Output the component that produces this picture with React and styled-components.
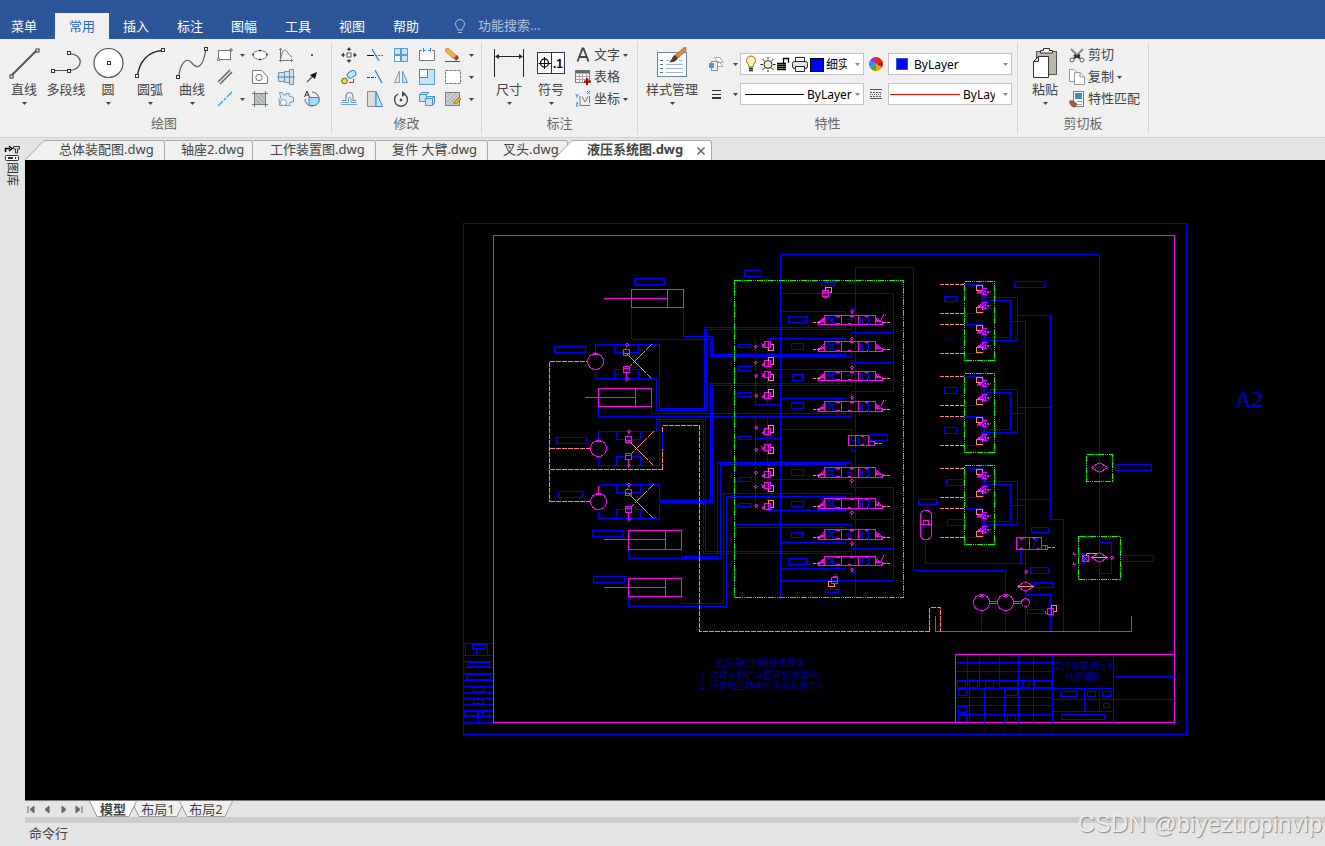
import React from "react";
import styled, { createGlobalStyle, css } from "styled-components";

const GlobalStyle = createGlobalStyle`
  * { box-sizing: border-box; }
  body { margin: 0; background: #e5e5e5; }
  button, input, select { font: inherit; color: inherit; }
  button { border: 0; padding: 0; background: none; cursor: pointer; }
`;

const uiFont = `"Noto Sans", "Noto Sans CJK SC", sans-serif`;

/* ---------- page frame ---------- */

const Page = styled.div`
  display: flex;
  flex-direction: column;
  min-height: 100vh;
  font-family: ${uiFont};
  font-size: 13px;
  color: #444;
  position: relative;
  overflow: hidden;
`;

const Header = styled.header`
  display: flex;
  align-items: flex-end;
  height: 39px;
  background: #2b579a;
`;

const MenuTab = styled.button`
  width: ${(p) => (p.$first ? 55 : 54)}px;
  padding-right: ${(p) => (p.$first ? 7 : 0)}px;
  height: 26px;
  line-height: 22px;
  color: ${(p) => (p.$active ? "#1e66c0" : "#fff")};
  background: ${(p) => (p.$active ? "#f0f0f0" : "transparent")};
`;

const Search = styled.label`
  display: flex;
  align-items: center;
  gap: 12px;
  height: 26px;
  margin-left: 21px;
  color: #b5c3da;
`;

const SearchInput = styled.input`
  width: 120px;
  height: 22px;
  margin-bottom: 2px;
  padding: 0;
  border: 0;
  outline: 0;
  background: transparent;
  &::placeholder { color: #b5c3da; opacity: 1; }
`;

/* ---------- ribbon ---------- */

const Ribbon = styled.nav`
  display: flex;
  height: 99px;
  padding: 3px 0;
  background: #f0f0f0;
  border-bottom: 1px solid #d2d2d2;
`;

const Group = styled.section`
  display: flex;
  flex-direction: column;
  width: ${(p) => p.$width}px;
  padding: 2px 0 0 ${(p) => p.$pad}px;
  border-right: 1px solid #d6d6d6;
`;

const GroupBody = styled.div`
  display: flex;
  height: 70px;
`;

const GroupTitle = styled.h2`
  margin: 0 0 0 -${(p) => p.$pad}px;
  font-size: 13px;
  font-weight: 400;
  line-height: 18px;
  text-align: center;
  color: #666;
`;

const BigButton = styled.button`
  display: flex;
  flex-direction: column;
  align-items: center;
  width: ${(p) => p.$width || 42}px;
  padding-top: 3px;
  line-height: 20px;
  white-space: nowrap;
`;

const CaretBox = styled.span`
  display: flex;
  justify-content: center;
  align-items: center;
  width: 10px;
  height: 8px;
`;

const ToolGrid = styled.div`
  display: grid;
  grid-template-columns: ${(p) => p.$columns};
  grid-auto-rows: 22px;
`;

const ToolButton = styled.button`
  display: flex;
  align-items: center;
  justify-content: ${(p) => (p.$start ? "flex-start" : "center")};
  svg { flex: none; }
`;

const ToolCell = styled.span`
  display: flex;
  justify-content: center;
  flex: none;
  width: ${(p) => p.$width}px;
`;

const LabelList = styled.div`
  display: flex;
  flex-direction: column;
`;

const LabelButton = styled.button`
  display: flex;
  align-items: center;
  height: 22px;
  white-space: nowrap;
`;

const LabelText = styled.span`
  height: 22px;
  line-height: 20px;
`;

const PropertyGrid = styled.div`
  display: grid;
  grid-template-columns: 38px 124px 24px 124px;
  grid-auto-rows: 22px;
  row-gap: 8px;
  margin-top: 9px;
`;

const Combo = styled.label`
  position: relative;
  display: flex;
  align-items: center;
  padding-left: ${(p) => p.$pad}px;
  padding-right: ${(p) => p.$end || 16}px;
  border: 1px solid #c3c3c3;
  background: #fff;
  color: #000;
  font-size: 12px;
  > svg { flex: none; }
`;

const ComboCaret = styled.span`
  position: absolute;
  right: 1px;
  top: 6px;
  color: #888;
  pointer-events: none;
`;

const Select = styled.select`
  appearance: none;
  flex: 1;
  min-width: 0;
  height: 20px;
  margin-left: ${(p) => p.$gap}px;
  padding: 0;
  border: 0;
  outline: 0;
  background: transparent;
  overflow: hidden;
  text-overflow: clip;
`;

/* ---------- workspace ---------- */

const Workspace = styled.div`
  display: flex;
  flex: 1;
`;

const Sidebar = styled.aside`
  width: 25px;
  padding: 7px 0 0 4px;
  background: #e5e5e5;
`;

const LibraryButton = styled.button`
  display: flex;
  flex-direction: column;
  align-items: center;
  width: 16px;
`;

const VerticalText = styled.span`
  writing-mode: vertical-rl;
  text-orientation: sideways;
  font-size: 12px;
  line-height: 16px;
  color: #333;
`;

const Main = styled.main`
  display: flex;
  flex-direction: column;
  flex: 1;
  min-width: 0;
`;

const FileTabs = styled.div`
  display: flex;
  align-items: flex-end;
  height: 22px;
  background: #e5e5e5;
`;

const FileTab = styled.button`
  display: flex;
  width: ${(p) => p.$width}px;
  height: 20px;
  margin-left: ${(p) => (p.$active ? -15 : 0)}px;
  line-height: 16px;
  white-space: nowrap;
  ${(p) => p.$active && css`
    position: relative;
    font-weight: 700;
  `}
`;

const TabFace = styled.span`
  flex: 1;
  height: 20px;
  padding-left: ${(p) => p.$pad}px;
  text-align: left;
  border-top: 1px solid #a9a9a9;
  border-right: 1px solid #a9a9a9;
  border-top-right-radius: 3px;
  background: ${(p) => (p.$active ? "#fff" : "#f0f0f0")};
`;

const CloseMark = styled.span`
  display: inline-flex;
  margin-left: 14px;
  vertical-align: -1px;
`;

const Canvas = styled.div`
  flex: 1;
  overflow: hidden;
  background: #000;
  svg { display: block; }
`;

const LayoutBar = styled.div`
  display: flex;
  height: 17px;
  border-top: 1px solid #777;
  background: #e5e5e5;
`;

const PageArrow = styled.button`
  display: flex;
  align-items: center;
  width: 16px;
  height: 16px;
  padding-left: 2px;
  color: #666;
`;

const LayoutTab = styled.button`
  position: relative;
  width: ${(p) => p.$width}px;
  height: 16px;
  margin-right: -6px;
  line-height: 12px;
  font-weight: ${(p) => (p.$active ? 700 : 400)};
  z-index: ${(p) => (p.$active ? 1 : 0)};
  svg { position: absolute; inset: 0; z-index: -1; }
`;

const TabLabel = styled.span`
  position: relative;
`;

const Splitter = styled.div`
  height: 6px;
  background: #ccc;
`;

const CommandLine = styled.div`
  height: 23px;
  padding-left: 4px;
  line-height: 20px;
  background: #e5e5e5;
`;

const Watermark = styled.div`
  position: absolute;
  right: 3px;
  bottom: 8px;
  font: 24px/28px "Liberation Sans", sans-serif;
  color: #ececec;
  text-shadow: 1px 1px 1px #888;
`;

/* ---------- icons ---------- */

const Svg = ({ w = 18, h = w, children, ...rest }) => (
  <svg width={w} height={h} viewBox={`0 0 ${w} ${h}`} fill="none" stroke="#555" aria-hidden="true" {...rest}>
    {children}
  </svg>
);

const Caret = () => (
  <CaretBox>
    <svg width="5" height="3" viewBox="0 0 5 3" aria-hidden="true"><path d="M0 0H5L2.5 3Z" fill="currentColor" /></svg>
  </CaretBox>
);

const Dot = ({ x, y, s = 3 }) => <rect x={x - s / 2} y={y - s / 2} width={s} height={s} fill="#fff" stroke="#333" />;

const big = {
  line: <Svg w={32}><path d="M4 28L28 4" strokeWidth="2" /><Dot x={29.5} y={3.5} /><Dot x={3.5} y={29.5} /></Svg>,
  poly: <Svg w={32}><path d="M19 6.500C34 7 34 23 19 23.500H3" strokeWidth="1.200" /><Dot x={19} y={6} /><Dot x={3} y={24} /><Dot x={19} y={24} /></Svg>,
  circle: <Svg w={32}><circle cx="16.500" cy="16" r="14.500" fill="#fff" strokeWidth="1.200" /><Dot x={17} y={16} /></Svg>,
  arc: <Svg w={32}><path d="M3.500 29C5 15 14 4 29 3.500" stroke="#222" strokeWidth="1.300" /><Dot x={29} y={3} /><Dot x={3} y={29} /></Svg>,
  spline: <Svg w={32}><path d="M3 29C4 17 10 10 15 15C20 21 23 21 26 16C28 12 29 8 30 2" stroke="#666" strokeWidth="1.300" /><Dot x={30} y={2} /><Dot x={2} y={30} /></Svg>,
  dim: <Svg w={32} stroke="#223"><path d="M1.500 2V30M30.500 2V30M3 9.500H29" /><path d="M2 9.500L6 7V12ZM30 9.500L26 7V12Z" fill="#223" stroke="none" /></Svg>,
  symbol: <Svg w={32} stroke="#111"><rect x="2.500" y="5.500" width="27" height="21" fill="#fff" stroke="#334" /><path d="M16.500 5V27" stroke="#334" /><circle cx="9.500" cy="16" r="4" strokeWidth="1.300" /><path d="M3.500 16.500H16M9.500 10V22" /><text x="18" y="21" fontSize="12" fontWeight="700" fontFamily="Liberation Sans, sans-serif" fill="#000" stroke="none">.1</text></Svg>,
  style: (
    <Svg w={32}>
      <rect x="1.500" y="5.500" width="29" height="24" fill="#fff" stroke="#66879f" />
      <path d="M4 13.500H7M4 17.500H7M4 21.500H7M4 25.500H7" stroke="#4d6f8f" />
      <path d="M10 17.500H27M10 21.500H27M10 25.500H27M10 13.500H13M23 13.500H27" stroke="#a6b2d0" />
      <path d="M19 8L28 .500H30V4L22 11Z" fill="#d08a48" stroke="#a0601c" strokeWidth=".600" />
      <path d="M13 15C15 15 16 9 19 8L22 11C21 14 17 16 13 15Z" fill="#5a3a22" stroke="none" />
    </Svg>
  ),
  paste: (
    <Svg w={32}>
      <rect x="7.500" y="4.500" width="20" height="23" fill="#bdb6ab" stroke="#555" />
      <path d="M11.500 6V3.500H14.500V1.500H20.500V3.500H23.500V6Z" fill="#fff" stroke="#333" />
      <path d="M9.500 9.500H19.500V30.500H4.500V14.500Z" fill="#fff" stroke="#333" />
      <path d="M9.500 9.500V14.500H4.500Z" fill="#ddd" stroke="#333" />
    </Svg>
  ),
};

const B = "#2f86c8";
const LB = "#c5e6fa";

const draw = [
  ["矩形", <Svg><rect x="2.500" y="4.500" width="12" height="9" fill="#fff" stroke="#777" /><circle cx="15" cy="4" r="1.200" fill="#fff" /><circle cx="2.500" cy="13.500" r="1.200" fill="#fff" /></Svg>, true],
  ["椭圆", <Svg><ellipse cx="9" cy="9" rx="7" ry="4.500" fill="#fff" stroke="#777" /><path d="M1 8.500h2M15 8.500h2M8 4.500h2M8 13.500h2" stroke="#333" strokeWidth="1.500" /></Svg>],
  ["公式曲线", <Svg stroke="#777"><path d="M3.500 2V16M2 14.500H16M4 12C5 4 8 2 11 7C12 9 13 10 15 10.500M2 3.500H5M14.500 13V16" /></Svg>],
  ["点", <Svg><rect x="8" y="8" width="2" height="2" fill="#555" stroke="none" /></Svg>],
  ["平行线", <Svg stroke="#666"><path d="M2 14L14 2M4 16L16 4" strokeWidth="1.500" /></Svg>, false],
  ["多边形", <Svg><path d="M1.500 2.500H11L16.500 9V15.500H1.500Z" fill="#fff" stroke="#777" /><circle cx="8" cy="9.500" r="3.200" stroke="#777" /></Svg>],
  ["轴", <Svg><path d="M1.500 4.500H7.500V3.500H12.500V1.500H16.500V16.500H12.500V14.500H7.500V13.500H1.500Z" fill="#d3dfe9" stroke="#7890a6" /><path d="M7.500 4V14M12.500 3V15" stroke="#7890a6" /><path d="M0 9H18" stroke={B} /></Svg>],
  ["箭头", <Svg><path d="M4 14L10 8" strokeWidth="1.200" /><path d="M14 4L12 11L7 7Z" fill="#111" stroke="none" /></Svg>],
  ["中心线", <Svg stroke="#30a0dc"><path d="M2 16L7 11M8 10L10 8M11 7L16 2" strokeWidth="1.300" /></Svg>, true],
  ["剖面线", <Svg stroke="#777"><rect x="3.500" y="3.500" width="11" height="11" fill="#bcc4c8" /><path d="M1 3.500H17M1 14.500H17M3.500 1V17M14.500 1V17" /><path d="M5 5L13 13M4 9L9 14M9 4L14 9" stroke="#9aa4aa" /></Svg>],
  ["齿轮", <Svg><path d="M2.500 2.500H5L6.500 5H9V3.500H12.500L12 6L16.500 7.500V12H13V15.500H2.500V12L1.500 9.500L4 8Z" fill="#e4eef6" stroke="#8496a6" /><circle cx="6.500" cy="12.500" r="3" fill="#fff" stroke="#8496a6" /></Svg>],
  ["局部放大", <Svg><path d="M9 2A7 7 0 1 1 2 9" stroke="#567" /><path d="M6 7.500H16A7 7 0 0 1 12 15.500H6Z" fill="#a8dbf8" stroke={B} /><path d="M1.500 7L4 1L6.500 7M2.500 5H5.500" stroke="#333" /></Svg>],
];

const modify = [
  ["平移", <Svg stroke="#333"><rect x="7" y="7" width="4" height="4" strokeWidth=".800" fill="#fff" /><path d="M9 3V5M9 13V15M3 9H5M13 9H15" /><path d="M9 1L6.500 4H11.500ZM9 17L6.500 14H11.500ZM1 9L4 6.500V11.500ZM17 9L14 6.500V11.500Z" fill="#444" stroke="none" /></Svg>],
  ["裁剪", <Svg><path d="M1 9.500H8" stroke="#111" /><path d="M9 9.500H17" stroke={B} strokeDasharray="2 1" /><path d="M6 3L13 15" stroke={B} strokeWidth="1.300" /></Svg>],
  ["阵列", <Svg stroke="#5f9cc2"><rect x="2.500" y="2.500" width="6" height="6" fill={LB} /><rect x="9.500" y="2.500" width="6" height="6" fill={LB} /><rect x="2.500" y="9.500" width="6" height="6" fill="#fff" /><rect x="9.500" y="9.500" width="6" height="6" fill={LB} /></Svg>],
  ["打断", <Svg><path d="M4 4.500H1.500V14.500H16.500V4.500H14" fill="#fff" stroke="#777" /><path d="M5.500 2V6M12.500 2V6M5 4.500H8M10 4.500H13" stroke={B} /></Svg>],
  ["删除", <Svg><path d="M1.500 3L4 2L13 10L10 13L2 6Z" fill="#f1b040" stroke="#b98022" strokeWidth=".800" /><path d="M10 12L13 9L15 12L12 15Z" fill="#a13c22" stroke="none" /><path d="M1 15.500H16" stroke="#555" /></Svg>],
  ["复制", <Svg><circle cx="4.500" cy="13" r="2.800" fill="#ffe70a" stroke="#555" /><rect x="7" y="3" width="9" height="6" rx="3" transform="rotate(-35 12 6)" fill={LB} stroke={B} /><path d="M9 14.500H13.500V11" stroke="#a33" /></Svg>],
  ["延伸", <Svg><path d="M1 9.500H10" stroke="#333" strokeDasharray="3 1" /><path d="M9 2L16 15" stroke={B} strokeWidth="1.300" /></Svg>],
  ["镜像", <Svg><path d="M7.500 3V14.500H2.500Z" fill="#e8e8e8" stroke="#999" /><path d="M10.500 3V14.500H15.500Z" fill={LB} stroke="#5f9cc2" /></Svg>],
  ["缩放", <Svg><rect x="1.500" y="1.500" width="15" height="15" fill={LB} stroke="#5f9cc2" /><rect x="1.500" y="1.500" width="8" height="8" fill="#fff" stroke="#777" /></Svg>],
  ["矩形编辑", <Svg><rect x="1.500" y="2.500" width="15" height="13" fill="#fff" stroke="#777" strokeDasharray="3 1" /></Svg>],
  ["等距线", <Svg><path d="M2 10.500H6V6A3.500 3.500 0 0 1 13 6V10.500H16" stroke="#6d7f90" /><path d="M1 14.500H17M1 12.500H8.500V8A1.500 1.500 0 0 1 11 8V12.500H17" stroke="#6fa6cc" /></Svg>],
  ["拉伸", <Svg><path d="M1.500 1.500H10V16.500H1.500Z" fill="#ddd" stroke="#888" /><path d="M10 1.500L16.500 16.500H10Z" fill={LB} stroke={B} /></Svg>],
  ["旋转", <Svg stroke="#444"><path d="M6 4A6.500 6.500 0 1 0 12 4" strokeWidth="1.300" /><path d="M10 1L14 4L10 7Z" fill="#444" stroke="none" /><circle cx="9" cy="10" r="1" fill="#444" /></Svg>],
  ["分解", <Svg stroke="#4c95c8"><path d="M1.500 4.500L4 2.500H11L9 4.500ZM1.500 4.500H8.500V11.500H1.500Z" fill={LB} /><path d="M7.500 8.500L10 6.500H16.500L14.500 8.500ZM7.500 8.500H14.500V15.500H7.500ZM14.500 8.500L16.500 6.500V13L14.500 15.500" fill={LB} /></Svg>],
  ["编辑", <Svg><rect x="1.500" y="2.500" width="14" height="13" fill="#ccc" stroke="#778" /><path d="M3 7L7 3M3 12L12 3M5 14L14 5" stroke="#aaa" /><path d="M9 13L15 7L17 9L12 14Z" fill="#e7a53a" stroke="#a8702c" strokeWidth=".800" /></Svg>],
];

const small = {
  text: <Svg><path d="M3.500 15.500L8.500 2.500H9.500L14.500 15.500M5.500 11H12.500" stroke="#444" strokeWidth="1.800" /></Svg>,
  table: <Svg stroke="#778"><rect x="1.500" y="2.500" width="14" height="12" fill="#fff" /><path d="M1 4H16" strokeWidth="3" stroke="#666" /><path d="M2 8.500H15M2 11.500H15M5.500 5V15M8.500 5V15M12.500 5V15" stroke="#aaa" /><path d="M13 10V17M10 13.500H17" stroke="#b00" strokeWidth="2" /></Svg>,
  coord: <Svg><path d="M6 6V15.500M6 15.500H16M8 6.500L11 12L14 6.500M15.500 6V13" stroke="#777" /><path d="M1.500 4L3 6L4.500 4M3 6V8M13 1L16 4M16 1L13 4M2 13H4L2 16H4" stroke={B} /></Svg>,
  layers: <Svg><path d="M7.500 2.500H13L16 7.500H10.500ZM8.500 6.500H12L16 11.500H9Z" fill="#fff" stroke="#aaa" /><rect x="4.500" y="6.500" width="6" height="9" fill="#eee" stroke="#8795a0" /><rect x="2" y="8" width="5" height="5" fill="#5b96c4" stroke="none" /></Svg>,
  lines: <Svg stroke="#333"><path d="M5 5.500H14M5 9.500H14" /><path d="M5 13H14" strokeWidth="2" /></Svg>,
  wheel: (
    <Svg w={14} stroke="none">
      <path d="M7 7L7 0A7 7 0 0 1 13 3.500Z" fill="#f02020" /><path d="M7 7L13 3.500A7 7 0 0 1 13 10.500Z" fill="#d01810" />
      <path d="M7 7L13 10.500A7 7 0 0 1 7 14Z" fill="#f5a000" /><path d="M7 7V14A7 7 0 0 1 1 10.500Z" fill="#2fae38" />
      <path d="M7 7L1 10.500A7 7 0 0 1 1 3.500Z" fill="#2d8cf0" /><path d="M7 7L1 3.500A7 7 0 0 1 7 0Z" fill="#a030c8" />
    </Svg>
  ),
  dashes: <Svg w={14} stroke="#555"><path d="M1 2.500H13M1 11.500H13" /><path d="M1 5.500H13M1 9.500H13" strokeDasharray="2 1" /><path d="M1 7.500H13" strokeDasharray="1 1" /></Svg>,
  cut: <Svg stroke="#555"><path d="M3 3L12 12M15 3L6 12" strokeWidth="1.800" stroke="#888" /><path d="M6 9L12 12M12 9L6 12" strokeWidth="2" stroke="#333" /><circle cx="4" cy="14" r="2" fill="#fff" /><circle cx="14" cy="14" r="2" fill="#fff" /></Svg>,
  copy: <Svg stroke="#999"><path d="M1.500 1.500H6L9.500 5V13.500H1.500Z" fill="#fff" /><path d="M6.500 4.500H12L16.500 9V16.500H6.500Z" fill="#fff" /><path d="M12 4.500V9H16.500" /></Svg>,
  match: <Svg><rect x="5.500" y="1.500" width="10" height="15" fill="#fff" stroke="#778" /><rect x="7" y="3" width="7" height="6" fill="#4d86b4" stroke="none" /><path d="M9 11.500H14M9 14.500H14" stroke="#999" /><path d="M1.500 11C4 10 6 11 9 14L7 17C3 17 2 14 1.500 11Z" fill="#a85d28" stroke="#6c3a18" strokeWidth=".600" /></Svg>,
};

const LayerIcons = () => (
  <svg width="82" height="18" viewBox="0 0 82 18" fill="none" stroke="#222" aria-hidden="true">
    <path d="M4 12C4 9 1.500 8 1.500 5.500A4.500 4.500 0 0 1 10.500 5.500C10.500 8 8 9 8 12Z" fill="#fff3b0" stroke="#86702c" />
    <path d="M4 13.500H8M4 15.500H8" strokeWidth="1.500" />
    <circle cx="23" cy="9.500" r="4" fill="#fdebd8" />
    <path d="M23 2V4M23 15V17M15.500 9.500H18M28 9.500H30.500M17.500 4L19.500 6M28.500 4L26.500 6M17.500 15L19.500 13M28.500 15L26.500 13" />
    <rect x="32" y="8" width="9" height="7" fill="#8a8a3c" fillOpacity=".500" stroke="none" />
    <path d="M32 8.500H41M32 10.500H41M32 12.500H41M32 14.500H41M38.500 8V3.500H43.500V8" strokeWidth="1.300" stroke="#000" />
    <path d="M50.500 7V2.500H59.500V7" fill="#fff" /><rect x="47.500" y="6.500" width="15" height="7" rx="2" fill="#e2e2e2" /><path d="M50.500 11.500H59.500V16.500H50.500Z" fill="#fff" />
    <rect x="65.500" y="3.500" width="13" height="13" fill="#00f" stroke="#000" />
  </svg>
);

/* ---------- hydraulic drawing ---------- */

const box = (x1, y1, x2, y2) => `M${x1} ${y1}H${x2}V${y2}H${x1}Z`;
const boxes = (list) => list.map((b) => box(...b)).join("");

const labelBoxes = [
  [634, 278, 664, 284], [554, 346, 585, 352], [556, 437, 586, 443], [558, 491, 582, 497], [592, 530, 622, 536], [593, 576, 624, 582],
  [744, 270, 761, 276], [821, 282, 834, 285], [788, 316, 806, 322], [791, 343, 803, 349], [792, 374, 802, 380], [791, 402, 803, 408],
  [791, 469, 803, 475], [791, 501, 803, 506], [791, 532, 802, 537], [788, 558, 806, 564], [825, 589, 838, 592], [869, 434, 887, 440],
  [738, 344, 751, 347], [738, 366, 751, 370], [738, 392, 751, 396], [738, 436, 751, 439], [738, 477, 751, 481], [738, 503, 751, 506],
  [944, 296, 956, 301], [944, 387, 956, 393], [944, 427, 956, 433], [946, 479, 963, 485], [947, 519, 965, 525], [918, 499, 936, 504],
  [1014, 281, 1044, 287], [1031, 527, 1048, 532], [1030, 567, 1048, 573], [1034, 582, 1052, 587], [1027, 609, 1043, 613],
  [1115, 464, 1151, 470], [1123, 555, 1153, 561],
];

const pipes = [
  "M595 353V344H659V408H704V327H845V324", "M595 370V378H656V410H706V329H851V319H845",
  "M683 307V336H712V354H845V351", "M631 307V339H710V356H851V351",
  "M659 500H710V383H845V380", "M659 502H712V385H851V375H845",
  "M651 406V413H845V411", "M598 406V416H851V411",
  "M598 440V431H656V419H705V551H851V556", "M598 457V465H659V421H703V553H845V556",
  "M598 484H659V500M598 510V518H659V502", "M662 431V448",
  "M681 549V556H717V462H851V467", "M628 549V558H720V464H845V467",
  "M681 596V603H723V493H851V498", "M628 596V606H726V496H845V498",
  "M734 524H851V529", "M734 527H845V529",
  "M780 597V254H1099V631", "M855 597V267H913V570H1005V594",
  "M780 293H893V391H851V397", "M780 311H845V315M855 308H851V315",
  "M851 341V332H893M851 371V362H893M780 398H845V401",
  "M767 338H845V341M767 369H845V371", "M755 338V354M755 356V404H780M767 338V404",
  "M755 416V510M767 416V510M755 438H780", "M780 429H851V440H855M851 445V450H855",
  "M767 479H845V477M767 510H845V508", "M845 472H851V487H893V580H780",
  "M851 508V519H893M845 534H851V548H893M851 565V572H855", "M780 542H845V539M780 568H845V565",
  "M1050 315V519H1063V631", "M1025 321V582M1025 591V597M1025 607V631M1025 594H1050V631",
  "M925 540V563H1025M1020 563V549", "M981 610V631M1005 610V631M995 595V608",
  "M1032 548L1037 537", "M1091 467H1107", "M1099 542H1111V573H1099", "M1071 553H1084V563H1071",
];

const frameRows = [643, 655, 661, 667, 673, 680, 686, 692, 698, 704, 710, 716, 722];
const frameCells = [
  [472, 644, 485, 648], [467, 662, 489, 666], [466, 674, 490, 679], [473, 687, 483, 691],
  [473, 699, 483, 703], [464, 711, 477, 715], [482, 711, 489, 715],
];

const titleRows = [662, 671, 680, 688, 697, 705, 714];
const titleCells = [
  [957, 681, 965, 687], [969, 681, 977, 687], [985, 681, 993, 687], [999, 681, 1017, 687], [1022, 681, 1029, 687], [1034, 681, 1051, 687],
  [958, 689, 966, 695], [1005, 689, 1017, 695], [958, 706, 966, 712], [958, 715, 966, 721], [1007, 715, 1015, 721],
  [1060, 691, 1076, 696], [1087, 691, 1095, 696], [1102, 691, 1110, 696], [1103, 703, 1109, 707], [1061, 714, 1104, 719],
];
const titleLines =
  titleRows.map((y) => `M956 ${y}H1052`).join("") +
  "M967 654V688M979 654V688M999 654V688M1018 654V722M1033 654V722M1052 654V722" +
  "M969 688V722M984 688V722M1004 688V722M1113 654V722M1052 688H1113M1052 699H1174M1052 711H1113M1113 676H1174M1084 688V711M1099 688V711";

const BLUE = "#00f";
const PINK = "#f0f";
const SALMON = "#ff8080";
const GREEN = "#0f0";

const Node = ({ x, y }) => <path d={`M${x} ${y - 2}V${y - 1}M${x - 1} ${y}H${x - 2}M${x + 1} ${y}H${x + 2}M${x} ${y + 1}V${y + 2}M${x - 1} ${y - 1}H${x + 1}M${x - 1} ${y + 1}H${x + 1}`} stroke={PINK} />;

const Cylinder = ({ x, y, w = 53, h = 18, rod }) => (
  <path stroke={PINK} d={`${box(x, y, x + w, y + h)}M${x + w - 16} ${y}V${y + h}M${rod} ${y + 9}H${x + w - 16}`} />
);

const Motor = ({ x, y, dx }) => (
  <g>
    <circle cx={x} cy={y + 17} r="8" stroke={PINK} />
    <path d={`M${x - 2} ${y + 10}H${x + 2}L${x} ${y + 8}Z`} fill={PINK} stroke={PINK} />
    <g transform={`translate(${dx} ${y})`}>
      <path stroke={BLUE} d="M614 0V8H623M629 8H638V0M614 34V25H623M629 25H638V34" />
      <path stroke={SALMON} strokeDasharray="8 1" d="M651 0L628 23M627 10L651 34M632 15L634 17" />
      <path stroke={PINK} d={`${box(623, 5, 629, 11)}${box(623, 22, 629, 28)}M623 9H629M623 24H629M625 3V5M626 28V32`} />
      <Node x={626} y={0} />
      <Node x={626} y={34} />
    </g>
  </g>
);

const Spool = ({ y, h = 9, lever }) => (
  <g transform={`translate(0 ${y})`}>
    <path stroke={PINK} d={`${box(824, 0, 875, h)}M841 0V${h}M858 0V${h}M835 1H839M847 ${h - 1}H850M849 1H853M864 1H868M835 ${h - 1}H839M866 ${h - 1}H868`} />
    <path stroke={BLUE} d={`M862 1V${h - 1}M868 0V${h}M828 1L834 ${h - 1}M834 1L828 ${h - 1}M828 1V3M834 ${h - 3}V${h - 1}`} />
    <path stroke={PINK} d={`${box(818, h - 3, 824, h)}${box(875, h - 3, 882, h)}M819 ${h - 3}L824 2M823 ${h - 4}V${h - 6}M875 2L881 ${h - 3}M876 ${h - 4}V${h - 6}`} />
    <path stroke={PINK} d={`M820 ${h - 4}H823M876 ${h - 4}H878M819 ${h - 2}H820M880 ${h - 1}H881`} />
    <path stroke={SALMON} strokeDasharray="3 1" d={`M812 ${h - 2}H819M882 ${h - 2}H889`} />
    {lever && <path stroke={PINK} d="M881 4V2M882 2V0M883 0V-2M884 -1H885" />}
  </g>
);

const Pilot = ({ y, up }) => (
  <g transform={`translate(0 ${y})`}>
    <path stroke={PINK} d={`${box(764, 0, 770, 6)}M768 0V6M763 2V5M762 ${up ? 3 : 2}V5M761 ${up ? 5 : 1}V${up ? 5 : 2}`} />
    <path stroke={SALMON} d={up ? "M770 4H773V-3H768V0" : "M770 3H773V9H768V6"} />
  </g>
);

const MiniValve = ({ y, hook }) => (
  <g transform={`translate(0 ${y})`}>
    <path stroke={SALMON} d={`M982 ${hook + 2}V${hook}H976V${hook + 5}H982`} />
    <path stroke={PINK} d="M981 -3H986M980 -2V2M981 3H986M977 0V2M978 -1V1M979 -1V1M983 -3L981 0L984 3M985 -2V3M986 -1L983 1M987 -1V1M988 -1V1M989 0H990" />
  </g>
);

const Block = ({ y }) => (
  <g transform={`translate(0 ${y})`}>
    <path stroke={BLUE} d="M964 3H983V32H964M964 43H983V72H964M981 8V26M984 8V26M981 48V66M984 48V66M981 16H1017V59H981M984 19H1010V56H984M1017 34H1050M1010 40H1025" />
    <path stroke={SALMON} strokeDasharray="4 1" d="M939 3H964M939 32H964M939 43H964M939 72H964" />
    <path stroke={GREEN} strokeDasharray="6 1 1 1 1 1" d={box(964, 0, 994, 79)} />
    <MiniValve y={10} hook={-6} />
    <MiniValve y={24} hook={2} />
    <MiniValve y={50} hook={-6} />
    <MiniValve y={64} hook={2} />
  </g>
);

const Filter = ({ x, y, line }) => (
  <g>
    <path stroke={PINK} d={`M${x - 8} ${y}L${x} ${y - 5}L${x + 8} ${y}L${x} ${y + 5}Z`} />
    <path stroke={line} d={`M${x - 8} ${y}H${x + 8}`} />
  </g>
);

const Note = styled.text`
  font: ${(p) => p.$size || 9}px "Noto Sans CJK SC", sans-serif;
  fill: #00009c;
`;

const SheetMark = styled.text`
  font: 23px "Liberation Serif", serif;
  fill: #0000d8;
`;

const Drawing = () => (
  <svg width="1300" height="640" viewBox="25 160 1300 640" role="img" aria-label="液压系统图">
    <g transform="translate(.5 .5)" fill="none" strokeWidth="1" shapeRendering="crispEdges">
      <g stroke={BLUE}>
        <path d={box(463, 223, 1186, 734)} />
        <path d={pipes.join("")} />
        <path d={boxes(labelBoxes)} />
        <path d={frameRows.map((y) => `M463 ${y}H493`).join("") + boxes(frameCells) + "M476 648V655M487 643V655M465 643V655M478 710V722"} />
      </g>
      <path stroke={PINK} d={box(493, 235, 1174, 722) + "M955 722V654H1174M935 615V631H1131V615"} />
      <path stroke={BLUE} d={titleLines + boxes(titleCells)} />
      <path stroke={SALMON} strokeDasharray="5 1" d="M549 361H587M549 361V501M549 448H590M549 469H662V448M662 431V425H699V631H929V607H940V631M549 501H590" />
      <path stroke={GREEN} strokeDasharray="6 1 1 1 1 1" d={box(734, 280, 903, 597) + box(1086, 454, 1112, 481) + box(1078, 536, 1120, 579)} />

      <Cylinder x={631} y={289} w={52} rod={603} />
      <Cylinder x={598} y={388} rod={584} />
      <Cylinder x={628} y={530} h={19} rod={603} />
      <Cylinder x={628} y={578} rod={603} />

      <Motor x={595} y={344} dx={0} />
      <Motor x={598} y={431} dx={2} />
      <Motor x={598} y={484} dx={2} />
      <path stroke={PINK} d="M598 485V493" />

      <Spool y={315} lever />
      <Spool y={341} h={10} />
      <Spool y={371} />
      <Spool y={401} h={10} lever />
      <Spool y={467} h={10} />
      <Spool y={498} h={10} />
      <Spool y={529} h={10} />
      <Spool y={556} lever />
      {[311, 338, 367, 397, 480, 512, 543, 569].map((y) => <Node key={y} x={851} y={y} />)}

      <path stroke={PINK} d={box(848, 435, 868, 445) + box(868, 441, 874, 445) + "M855 435V445M860 436H863M860 444H863"} />
      <path stroke={BLUE} d="M858 436V445M865 436V445" />
      <path stroke={SALMON} strokeDasharray="3 1" d="M874 443H881" />

      {[[341], [360, 1], [371], [392, 1], [428, 1], [444], [471, 1], [482], [503, 1]].map(([y, up]) => <Pilot key={y} y={y} up={up} />)}
      {[346, 362, 375, 395, 427, 449, 472, 486, 505].map((y) => <Node key={y} x={755} y={y} />)}

      <path stroke={PINK} d={box(822, 290, 828, 296) + "M822 292H828M824 297H826M824 298H825" + box(831, 577, 837, 583) + "M831 581H837M832 576H836M834 574H835"} />
      <path stroke={SALMON} d="M825 290V287H831V292H829M831 581H828V586H834V583" />

      <Block y={281} />
      <Block y={373} />
      <Block y={465} />

      <path stroke={PINK} d="M920 515Q920 510 925 510Q931 510 931 515V534Q931 539 925 539Q920 539 920 534ZM920 524H931M923 524V520H928V524" />
      <path stroke={PINK} d={box(1016, 537, 1041, 549) + box(1041, 545, 1047, 549) + "M1029 537V549M1019 538H1022M1032 538H1034M1019 548H1022M1036 548H1038M1045 545V549"} />
      <path stroke={SALMON} strokeDasharray="3 1" d="M1047 547H1055" />
      <Node x={1025} y={571} />
      <Filter x={1025} y={586} line={SALMON} />
      <g stroke={PINK}>
        <circle cx="981" cy="602" r="8" />
        <circle cx="1005" cy="602" r="8" />
        <circle cx="1025" cy="602" r="4" />
        <path d="M989 601H997M989 603H997M1013 601H1021M1013 603H1021" />
        <path fill={PINK} d="M979 596H983L981 594ZM1003 596H1007L1005 594Z" />
        <path d={box(1047, 608, 1053, 614) + "M1051 608V614M1045 610V613H1047"} />
        <path d={box(1082, 555, 1088, 561) + "M1082 555L1088 561M1088 555L1082 561M1073 551V554M1072 554H1075M1073 561V564M1072 564H1075"} />
      </g>
      <path stroke={SALMON} d="M1051 608V605H1056V611H1053M1086 555V553H1098" />
      <Filter x={1099} y={467} line={BLUE} />
      <Filter x={1099} y={557} line={SALMON} />
      <Node x={1111} y={557} />
    </g>
    <Note x="715" y="666">主方向控制阀技术要求</Note>
    <Note x="700" y="678">1. 动臂斗杆铲斗回转加过滤阀;</Note>
    <Note x="700" y="689">2. 行走和回转中位滑阀机能为Y。</Note>
    <Note x="1053" y="669">工作装置液压系</Note>
    <Note x="1065" y="680">统原理图</Note>
    <Note x="945" y="341" $size={5}>回转</Note>
    <SheetMark x="1235" y="407">A2</SheetMark>
  </svg>
);

/* ---------- page ---------- */

const menus = ["菜单", "常用", "插入", "标注", "图幅", "工具", "视图", "帮助"];
const drawTools = [["直线", big.line, 1], ["多段线", big.poly, 0], ["圆", big.circle, 1], ["圆弧", big.arc, 1], ["曲线", big.spline, 1]];
const fileTabs = [["总体装配图.dwg", 140, 14], ["轴座2.dwg", 88, 16], ["工作装置图.dwg", 123, 17], ["复件 大臂.dwg", 112, 16], ["叉头.dwg", 80, 15]];

const Big = ({ label, icon, caret, width }) => (
  <BigButton $width={width}>
    {icon}
    <span>{label}</span>
    {caret ? <Caret /> : null}
  </BigButton>
);

const Labeled = ({ icon, label, caret }) => (
  <LabelButton>
    <ToolCell $width={22}>{icon}</ToolCell>
    <LabelText>{label}</LabelText>
    {caret && <Caret />}
  </LabelButton>
);

const Slant = ({ fill }) => (
  <svg width="20" height="20" viewBox="0 0 20 20" aria-hidden="true">
    <path d="M0 20L18 2L20 .500V20Z" fill={fill} />
    <path d="M0 20L18 1.500L20 .500" fill="none" stroke="#a9a9a9" />
  </svg>
);

const LayoutShape = ({ width, fill }) => (
  <svg width={width} height="16" viewBox={`0 0 ${width} 16`} aria-hidden="true">
    <path d={`M.500 0L8 15.500H${width - 8}L${width - 0.5} 0`} fill={fill} stroke="#999" />
  </svg>
);

export default function App() {
  return (
    <Page>
      <GlobalStyle />
      <Header>
        {menus.map((m, i) => <MenuTab key={m} $first={i === 0} $active={i === 1}>{m}</MenuTab>)}
        <Search>
          <svg width="12" height="15" viewBox="0 0 12 15" fill="none" stroke="#b5c3da" aria-hidden="true">
            <path d="M4 11C4 8.500 1.500 8 1.500 5A4.500 4.500 0 0 1 10.500 5C10.500 8 8 8.500 8 11ZM4 13.500H8" />
          </svg>
          <SearchInput aria-label="功能搜索" placeholder="功能搜索..." />
        </Search>
      </Header>

      <Ribbon>
        <Group $width={332} $pad={3}>
          <GroupBody>
            {drawTools.map(([label, icon, caret]) => <Big key={label} label={label} icon={icon} caret={caret} />)}
            <ToolGrid $columns="34px 26px 26px 26px">
              {draw.map(([name, icon, caret], i) => (
                <ToolButton key={name} aria-label={name} $start={i % 4 === 0}>
                  {i % 4 === 0 ? <ToolCell $width={24}>{icon}</ToolCell> : icon}
                  {caret && <Caret />}
                </ToolButton>
              ))}
            </ToolGrid>
          </GroupBody>
          <GroupTitle $pad={6}>绘图</GroupTitle>
        </Group>

        <Group $width={150} $pad={4}>
          <GroupBody>
            <ToolGrid $columns="26px 26px 26px 26px 36px">
              {modify.map(([name, icon], i) => (
                <ToolButton key={name} aria-label={name} $start={i % 5 === 4}>
                  {i % 5 === 4 ? <ToolCell $width={26}>{icon}</ToolCell> : icon}
                  {i % 5 === 4 && <Caret />}
                </ToolButton>
              ))}
            </ToolGrid>
          </GroupBody>
          <GroupTitle $pad={4}>修改</GroupTitle>
        </Group>

        <Group $width={156} $pad={6}>
          <GroupBody>
            <Big label="尺寸" icon={big.dim} caret />
            <Big label="符号" icon={big.symbol} caret />
            <LabelList>
              <Labeled icon={small.text} label="文字" caret />
              <Labeled icon={small.table} label="表格" />
              <Labeled icon={small.coord} label="坐标" caret />
            </LabelList>
          </GroupBody>
          <GroupTitle $pad={6}>标注</GroupTitle>
        </Group>

        <Group $width={380} $pad={4}>
          <GroupBody>
            <Big label="样式管理" icon={big.style} caret width={60} />
            <PropertyGrid>
              <ToolButton aria-label="图层" $start><ToolCell $width={28}>{small.layers}</ToolCell><Caret /></ToolButton>
              <Combo $pad={4}>
                <LayerIcons />
                <Select $gap={-1} aria-label="图层"><option>细实线层</option></Select>
                <ComboCaret><Caret /></ComboCaret>
              </Combo>
              <ToolButton aria-label="颜色">{small.wheel}</ToolButton>
              <Combo $pad={7}>
                <Svg w={12}><rect x=".500" y=".500" width="11" height="11" fill="#00f" stroke="#16c" /></Svg>
                <Select $gap={6} aria-label="颜色"><option>ByLayer</option></Select>
                <ComboCaret><Caret /></ComboCaret>
              </Combo>
              <ToolButton aria-label="线宽" $start><ToolCell $width={28}>{small.lines}</ToolCell><Caret /></ToolButton>
              <Combo $pad={4} $end={11}>
                <Svg w={59} h={3}><path d="M0 1.500H59" stroke="#000" /></Svg>
                <Select $gap={3} aria-label="线宽"><option>ByLayer</option></Select>
                <ComboCaret><Caret /></ComboCaret>
              </Combo>
              <ToolButton aria-label="线型">{small.dashes}</ToolButton>
              <Combo $pad={1}>
                <Svg w={70} h={3}><path d="M0 1.500H70" stroke="#f00" /></Svg>
                <Select $gap={3} aria-label="线型"><option>ByLayer</option></Select>
                <ComboCaret><Caret /></ComboCaret>
              </Combo>
            </PropertyGrid>
          </GroupBody>
          <GroupTitle $pad={4}>特性</GroupTitle>
        </Group>

        <Group $width={131} $pad={6}>
          <GroupBody>
            <Big label="粘贴" icon={big.paste} caret />
            <LabelList>
              <Labeled icon={small.cut} label="剪切" />
              <Labeled icon={small.copy} label="复制" caret />
              <Labeled icon={small.match} label="特性匹配" />
            </LabelList>
          </GroupBody>
          <GroupTitle $pad={6}>剪切板</GroupTitle>
        </Group>
      </Ribbon>

      <Workspace>
        <Sidebar>
          <LibraryButton>
            <svg width="16" height="17" viewBox="0 0 16 17" fill="none" stroke="#333" aria-hidden="true">
              <path d="M1.500 7V3.500H6M5 1L8 3.500L5 6" stroke="#000" strokeWidth="1.500" />
              <path d="M9.500 1.500H15.500V4H13.500V8H11.500V4H9.500Z" fill="#ddd" />
              <rect x="1.500" y="10.500" width="13" height="5" rx="1" fill="#fff" />
              <path d="M4 13H9M11 13H12" strokeWidth="2" />
            </svg>
            <VerticalText>图库</VerticalText>
          </LibraryButton>
        </Sidebar>

        <Main>
          <FileTabs>
            {fileTabs.map(([name, width, pad], i) => (
              <FileTab key={name} $width={width}>
                {i === 0 && <Slant fill="#f0f0f0" />}
                <TabFace $pad={pad}>{name}</TabFace>
              </FileTab>
            ))}
            <FileTab $width={159} $active>
              <Slant fill="#fff" />
              <TabFace $pad={14} $active>
                液压系统图.dwg
                <CloseMark><Svg w={8} stroke="#666"><path d="M.500 .500L7.500 7.500M7.500 .500L.500 7.500" strokeWidth="1.500" /></Svg></CloseMark>
              </TabFace>
            </FileTab>
          </FileTabs>

          <Canvas><Drawing /></Canvas>

          <LayoutBar>
            {["M1 1V8M7 1V8L3 4.500Z", "M6 1V8L2 4.500Z", "M3 1V8L7 4.500Z", "M1 1V8L5 4.500ZM7 1V8"].map((d, i) => (
              <PageArrow key={d} aria-label={["首页", "上一页", "下一页", "末页"][i]}>
                <Svg w={9} fill="#666" stroke="#666"><path d={d} strokeWidth="1" /></Svg>
              </PageArrow>
            ))}
            <LayoutTab $width={48} $active><LayoutShape width={48} fill="#fff" /><TabLabel>模型</TabLabel></LayoutTab>
            <LayoutTab $width={54}><LayoutShape width={54} fill="#f0f0f0" /><TabLabel>布局1</TabLabel></LayoutTab>
            <LayoutTab $width={54}><LayoutShape width={54} fill="#f0f0f0" /><TabLabel>布局2</TabLabel></LayoutTab>
          </LayoutBar>
          <Splitter />
          <CommandLine>命令行</CommandLine>
        </Main>
      </Workspace>
      <Watermark>CSDN @biyezuopinvip</Watermark>
    </Page>
  );
}
